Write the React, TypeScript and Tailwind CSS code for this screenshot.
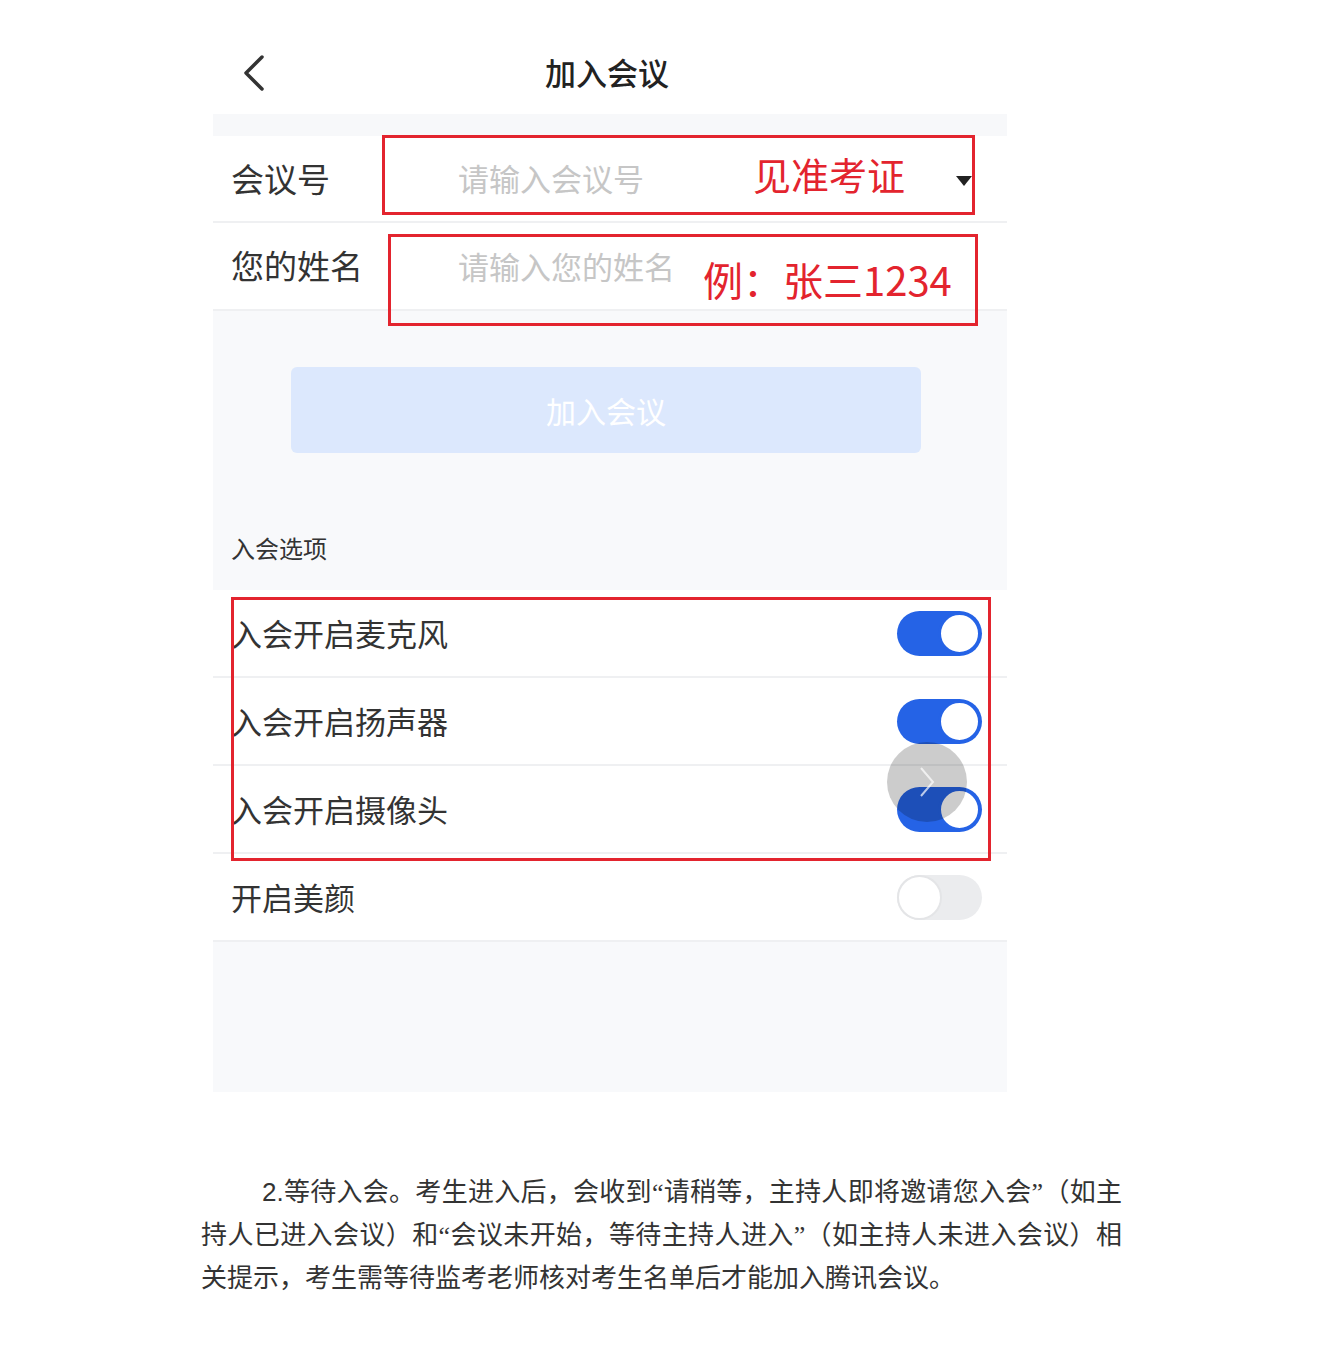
import React from 'react';

const Toggle = ({ on }: { on: boolean }) =>
  on ? (
    <div className="flex h-[45px] w-[85px] items-center justify-end rounded-full bg-[#2563e6] pr-[1px]">
      <div className="h-[43px] w-[43px] rounded-full border-[3px] border-[#2563e6] bg-white" />
    </div>
  ) : (
    <div className="flex h-[45px] w-[85px] items-center justify-start rounded-full bg-[#ebecee]">
      <div className="h-[45px] w-[45px] rounded-full border-2 border-[#e4e5e7] bg-white" />
    </div>
  );

const OptionRow = ({ label, on }: { label: string; on: boolean }) => (
  <div className="flex h-[88px] items-center justify-between border-b-2 border-[#eff0f2] bg-white pl-[18px] pr-[25px]">
    <span className="text-[31px] text-[#333]">{label}</span>
    <Toggle on={on} />
  </div>
);

export default function App() {
  return (
    <div className="min-h-[1372px] bg-white" style={{ fontFamily: '"Noto Sans CJK SC", "Noto Sans", sans-serif' }}>
      <div className="relative ml-[213px] w-[794px]">
        {/* header */}
        <div className="relative flex h-[114px] items-center justify-center bg-white pt-[30px]">
          <svg className="absolute left-[28px] top-[54px]" width="26" height="38" viewBox="0 0 26 38">
            <path d="M21 3 L5 19 L21 35" fill="none" stroke="#333" strokeWidth="3.5" strokeLinecap="round" strokeLinejoin="round" />
          </svg>
          <span className="-ml-[6px] text-[31px] font-medium text-[#222]">加入会议</span>
        </div>
        <div className="h-[22px] bg-[#f7f8fa]" />

        {/* inputs */}
        <div className="flex h-[87px] items-center border-b-2 border-[#eff0f2] bg-white pl-[18px]">
          <span className="w-[227px] text-[33px] text-[#333]">会议号</span>
          <span className="text-[31px] text-[#c6c6c6]">请输入会议号</span>
        </div>
        <div className="flex h-[88px] items-center border-b-2 border-[#eff0f2] bg-white pl-[18px]">
          <span className="w-[227px] text-[33px] text-[#333]">您的姓名</span>
          <span className="text-[31px] text-[#c6c6c6]">请输入您的姓名</span>
        </div>

        {/* button + section title */}
        <div className="bg-[#f8f9fb] pb-[30px] pt-[56px]">
          <div className="ml-[78px] mr-[86px] flex h-[86px] items-center justify-center rounded-[6px] bg-[#dce8fd]">
            <span className="text-[30px] text-white">加入会议</span>
          </div>
          <div className="mt-[83px] pl-[18px] text-[24px] leading-[24px] text-[#333]">入会选项</div>
        </div>

        <OptionRow label="入会开启麦克风" on />
        <OptionRow label="入会开启扬声器" on />
        <OptionRow label="入会开启摄像头" on />
        <OptionRow label="开启美颜" on={false} />
        <div className="h-[150px] bg-[#f8f9fb]" />

        {/* dropdown triangle */}
        <div className="absolute left-[743px] top-[176px] h-0 w-0 border-x-[8px] border-t-[10px] border-x-transparent border-t-[#222]" />

        {/* floating gray circle */}
        <div className="absolute left-[674px] top-[742px] flex h-[80px] w-[80px] items-center justify-center rounded-full bg-black/20">
          <svg width="20" height="36" viewBox="0 0 20 36">
            <path d="M4 4 L16 18 L4 32" fill="none" stroke="#ffffff" strokeOpacity="0.7" strokeWidth="2" />
          </svg>
        </div>

        {/* red annotation boxes */}
        <div className="absolute left-[169px] top-[135px] h-[80px] w-[593px] border-[3px] border-[#e3242e]">
          <span className="absolute left-[368px] top-[13px] text-[38px] leading-[46px] text-[#e3242e]">见准考证</span>
        </div>
        <div className="absolute left-[175px] top-[234px] h-[92px] w-[590px] border-[3px] border-[#e3242e]">
          <span className="absolute left-[312px] top-[18px] text-[40px] leading-[48px] text-[#e3242e]">例：张三1234</span>
        </div>
        <div className="absolute left-[18px] top-[597px] h-[264px] w-[760px] border-[3px] border-[#e3242e]" />
      </div>

      {/* paragraph */}
      <div
        className="ml-[201px] mt-[79px] w-[921px] text-[26px] leading-[43px] text-[#333] [text-spacing-trim:space-all]"
        style={{ fontFamily: '"Liberation Serif", "Noto Sans CJK SC", serif' }}
      >
        <div className="pl-[61px] text-justify [text-align-last:justify]">
          <span style={{ fontFamily: '"Liberation Sans", sans-serif' }}>2.</span>等待入会。考生进入后，会收到“请稍等，主持人即将邀请您入会”（如主
        </div>
        <div className="text-justify [text-align-last:justify]">
          持人已进入会议）和“会议未开始，等待主持人进入”（如主持人未进入会议）相
        </div>
        <div>关提示，考生需等待监考老师核对考生名单后才能加入腾讯会议。</div>
      </div>
    </div>
  );
}
